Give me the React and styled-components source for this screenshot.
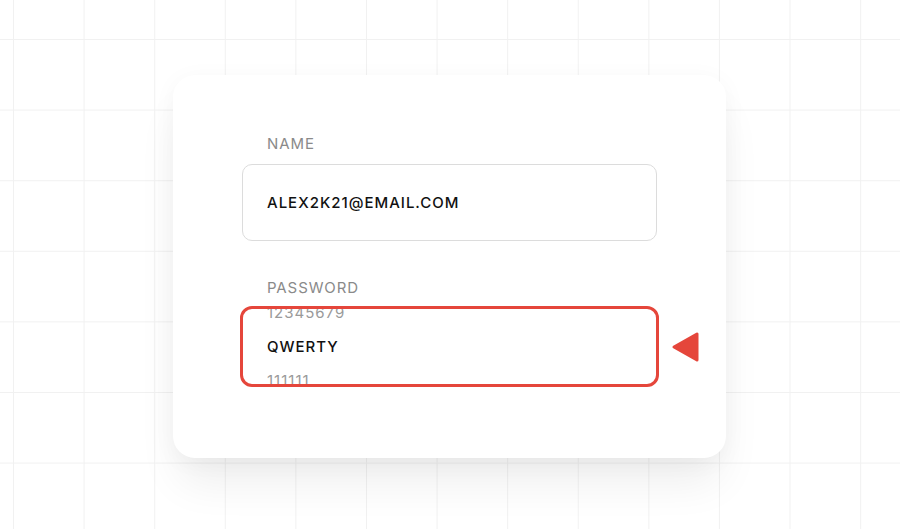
import React from "react";
import styled, { createGlobalStyle } from "styled-components";

const GlobalStyle = createGlobalStyle`
  html, body { margin: 0; padding: 0; }
  body {
    font-family: Inter, "Noto Sans", sans-serif;
    background-color: #ffffff;
    background-image:
      linear-gradient(to right, #f1f1f1 1px, transparent 1px),
      linear-gradient(to bottom, #f1f1f1 1px, transparent 1px);
    background-size: 70.6px 70.6px;
    background-position: 13px 39px;
  }
`;

const Page = styled.div`
  height: 100vh;
  display: flex;
  align-items: center;
  justify-content: center;
`;

const Card = styled.div`
  width: 553px;
  box-sizing: border-box;
  margin-top: 4px;
  margin-right: 1px;
  padding: 60px 69px 71px;
  background: #fff;
  border-radius: 22px;
  box-shadow: 0 30px 44px -6px rgba(0, 0, 0, 0.07), 0 4px 24px rgba(0, 0, 0, 0.04);
  display: flex;
  flex-direction: column;
`;

const Label = styled.div`
  padding-left: 25px;
  font-size: 15px;
  line-height: 18px;
  letter-spacing: 0.9px;
  color: #8a8a8a;
  margin-bottom: ${(p) => p.$gap}px;
`;

const Input = styled.div`
  height: 77px;
  box-sizing: border-box;
  border: 1px solid #dcdcdc;
  border-radius: 10px;
  padding-left: 24px;
  display: flex;
  align-items: center;
  font-size: 15px;
  font-weight: 450;
  letter-spacing: 1px;
  color: #111;
  margin-bottom: 38px;
`;

const PickerRow = styled.div`
  display: flex;
  align-items: center;
  margin: 0 -2px;
  position: relative;
`;

const Picker = styled.div`
  flex: 1;
  height: 81px;
  box-sizing: border-box;
  border: 3px solid #e5463b;
  border-radius: 12px;
  padding-left: 24px;
  overflow: hidden;
  display: flex;
  flex-direction: column;
  justify-content: center;
`;

const Option = styled.div`
  flex: 0 0 34px;
  display: flex;
  align-items: center;
  font-size: 15px;
  letter-spacing: 1px;
  font-weight: ${(p) => (p.$active ? 450 : 400)};
  color: ${(p) => (p.$active ? "#111" : "#9a9a9a")};
`;

const Pointer = styled.svg`
  position: absolute;
  right: -42px;
  top: 50%;
  transform: translateY(-50%);
`;

export default function App() {
  return (
    <>
      <GlobalStyle />
      <Page>
        <Card>
          <Label $gap={11}>NAME</Label>
          <Input>ALEX2K21@EMAIL.COM</Input>
          <Label $gap={9}>PASSWORD</Label>
          <PickerRow>
            <Picker>
              <Option>12345679</Option>
              <Option $active>QWERTY</Option>
              <Option>111111</Option>
            </Picker>
            <Pointer width="30" height="32" viewBox="0 0 30 32">
              <polygon
                points="26,3 26,29 3,16"
                fill="#e5463b"
                stroke="#e5463b"
                strokeWidth="3"
                strokeLinejoin="round"
              />
            </Pointer>
          </PickerRow>
        </Card>
      </Page>
    </>
  );
}
